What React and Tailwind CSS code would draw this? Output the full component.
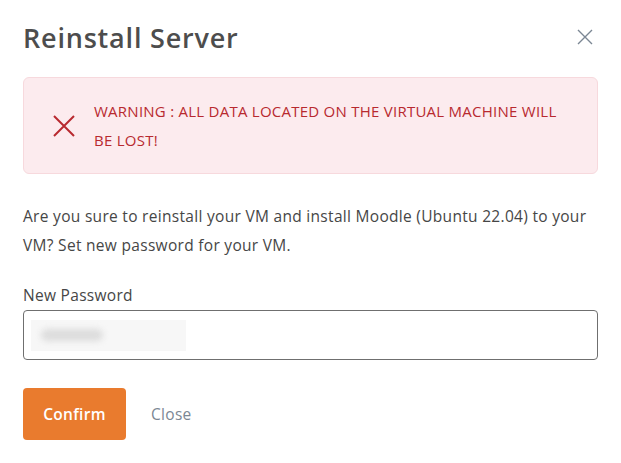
import React from 'react';

export default function App() {
    return (
        <div className="w-[621px] h-[463px] bg-white px-[23px] text-[#4a4a4a]" style={{ fontFamily: '"Open Sans", "Noto Sans", sans-serif' }}>
            {/* Header */}
            <div className="flex items-center justify-between pt-[16px] h-[58px]">
                <h1 className="text-[27px] font-semibold leading-none tracking-[0.8px] text-[#4d4d4d]">Reinstall Server</h1>
                <button className="mr-[5px] text-[#7b8794]">
                    <svg width="16" height="16" viewBox="0 0 16 16" fill="none" stroke="currentColor" strokeWidth="1.4">
                        <path d="M1 1L15 15M15 1L1 15" />
                    </svg>
                </button>
            </div>

            {/* Warning */}
            <div className="mt-[19px] flex items-center h-[97px] bg-[#fcebee] border border-[#f7d9dd] rounded-md">
                <div className="pl-[29px] pr-[19px] text-[#b8292f]">
                    <svg width="22" height="22" viewBox="0 0 22 22" fill="none" stroke="currentColor" strokeWidth="2">
                        <path d="M1 1L21 21M21 1L1 21" />
                    </svg>
                </div>
                <p className="text-[15px] leading-[29px] tracking-[0.25px] text-[#b8292f] pr-[18px]">
                    WARNING : ALL DATA LOCATED ON THE VIRTUAL MACHINE WILL BE LOST!
                </p>
            </div>

            {/* Body */}
            <p className="mt-[28px] text-[15.5px] leading-[29px] tracking-[0.3px] text-[#464646]">
                Are you sure to reinstall your VM and install Moodle (Ubuntu 22.04) to your VM? Set new password for your VM.
            </p>

            <label className="block mt-[24px] text-[15.5px] tracking-[0.3px] text-[#464646]">New Password</label>
            <div className="mt-[3px] h-[50px] border border-[#6f6f6f] rounded-[4px] flex items-center px-[7px]">
                <div className="w-[155px] h-[31px] bg-[#f7f7f7] flex items-center pl-[10px]">
                    <div className="w-[62px] h-[12px] rounded-full bg-[#dcdcdc] blur-[3px]"></div>
                </div>
            </div>

            {/* Actions */}
            <div className="mt-[28px] flex items-center gap-[25px]">
                <button className="w-[103px] h-[52px] bg-[#e97b2e] rounded-[4px] text-white text-[15.5px] font-semibold tracking-[0.3px]">Confirm</button>
                <button className="text-[15.5px] tracking-[0.3px] text-[#7b8794]">Close</button>
            </div>
        </div>
    );
}
